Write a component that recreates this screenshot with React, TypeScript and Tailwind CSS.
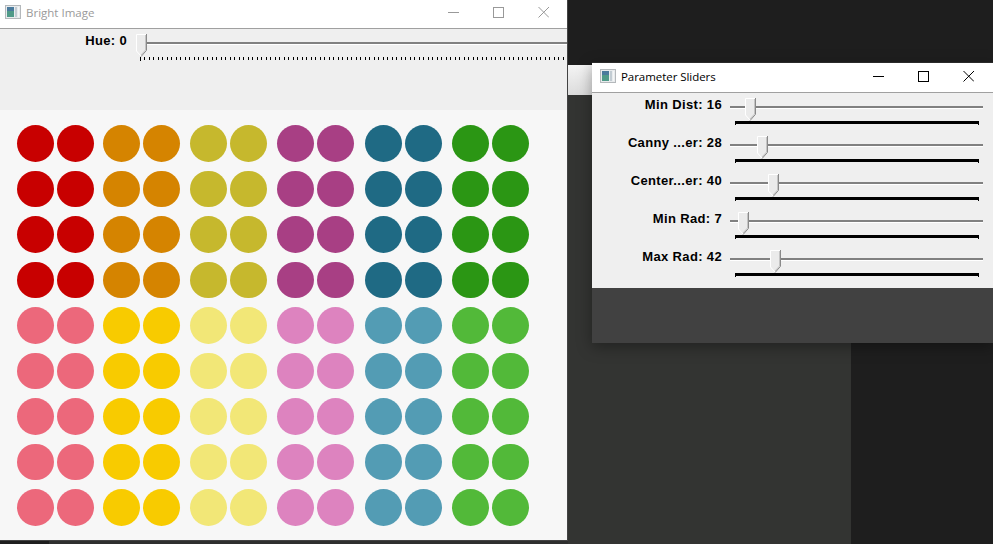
const rows = [
  "bg-[#c80000]",
  "bg-[#d58400]",
  "bg-[#c6b82d]",
  "bg-[#a83f84]",
  "bg-[#1f6a84]",
  "bg-[#2b9614]",
];
const lightRows = [
  "bg-[#ec687b]",
  "bg-[#f8cb00]",
  "bg-[#f2e777]",
  "bg-[#dd83bf]",
  "bg-[#539cb4]",
  "bg-[#52b939]",
];
const groupMargins = ["ml-0", "ml-[9.5px]", "ml-[10.5px]", "ml-[10.5px]", "ml-[11.5px]", "ml-[10.5px]"];

function WindowIcon() {
  return (
    <svg width="16" height="14" viewBox="0 0 16 14" className="shrink-0">
      <rect x="0.5" y="0.5" width="15" height="13" fill="#e8ebed" stroke="#b4b8bb" />
      <rect x="2" y="2" width="7" height="10" fill="#4f9a88" />
      <rect x="2" y="2" width="7" height="4" fill="#4a7a9c" />
      <rect x="10" y="2" width="2" height="10" fill="#c2ccd3" />
      <rect x="13" y="2" width="1" height="10" fill="#f4f6f7" />
    </svg>
  );
}

function WindowButtons({ color, className }: { color: string; className: string }) {
  return (
    <svg width="101" height="11" viewBox="0 0 101 11" className={className}>
      <path d="M0 5.5H11" stroke={color} strokeWidth="1" />
      <rect x="45.5" y="0.5" width="10" height="10" fill="none" stroke={color} />
      <path d="M90.5 0 L101 10.5 M101 0 L90.5 10.5" stroke={color} strokeWidth="1" />
    </svg>
  );
}

function Thumb({ className }: { className: string }) {
  return (
    <svg width="11" height="23" viewBox="0 0 11 23" className={className}>
      <path d="M1 1H10V16L5 22L1 17Z" fill="#ebebeb" />
      <path d="M.5 17V.5H10" fill="none" stroke="#ffffff" />
      <path d="M10.5 0V16.3L5 22.6" fill="none" stroke="#8a8a8a" />
      <path d="M9.5 1V16L5 21" fill="none" stroke="#c4c4c4" />
      <path d="M.5 17L5 22" fill="none" stroke="#ffffff" />
    </svg>
  );
}

function Track({ className }: { className: string }) {
  return (
    <div className={className}>
      <div className="h-[2px] bg-[#808080]" />
      <div className="h-[1px] bg-[#ffffff]" />
    </div>
  );
}

const params = [
  { label: "Min Dist: 16", thumb: "left-[15px]" },
  { label: "Canny ...er: 28", thumb: "left-[27px]" },
  { label: "Center...er: 40", thumb: "left-[38px]" },
  { label: "Min Rad: 7", thumb: "left-[8px]" },
  { label: "Max Rad: 42", thumb: "left-[40px]" },
];

function ParamRow({ label, thumb }: { label: string; thumb: string }) {
  return (
    <div className="flex h-[38px] items-start">
      <div className="-mt-[1px] w-[130px] text-right font-['Liberation_Sans',sans-serif] text-[13px] leading-[16px] font-bold tracking-[0.35px] text-black">
        {label}
      </div>
      <div className="relative ml-[8px] h-[38px] w-[253px]">
        <Track className="absolute top-[8px] right-0 left-0" />
        <Thumb className={`absolute top-0 ${thumb}`} />
        <div className="absolute top-[23px] left-[5px] w-[244px]">
          <div className="h-[3px] bg-black" />
          <div className="flex justify-between">
            <div className="h-[1px] w-[1px] bg-black" />
            <div className="h-[1px] w-[1px] bg-black" />
          </div>
        </div>
      </div>
    </div>
  );
}

export default function App() {
  return (
    <div className="relative h-[544px] w-[993px] overflow-hidden bg-[#1e1e1e]">
      {/* Windows behind */}
      <div className="absolute top-[95px] left-[568px] h-[449px] w-[283px] bg-[#333432]" />
      <div className="absolute top-[65px] left-[568px] h-[30px] w-[24px] bg-gradient-to-b from-[#f4f4f4] to-[#dcdcdc]" />
      <div className="absolute top-[541px] left-[49px] h-[3px] w-[519px] bg-[#2e2f2e]" />

      {/* Bright Image window */}
      <div className="absolute top-0 left-0 flex h-[541px] w-[568px] flex-col border-r border-b border-[#434343] bg-white">
        <div className="flex h-[29px] shrink-0 items-start justify-between border-b border-[#a0a0a0] bg-white">
          <div className="flex items-start gap-[5px] pt-[5px] pl-[5px]">
            <WindowIcon />
            <span className="pt-[1px] font-['Open_Sans',sans-serif] text-[11.5px] leading-[14px] text-[#9a9a9a]">Bright Image</span>
          </div>
          <WindowButtons color="#999999" className="mt-[7px] mr-[18px]" />
        </div>
        <div className="relative h-[81px] shrink-0 bg-[#efefef]">
          <div className="absolute top-[4px] right-[440px] font-['Liberation_Sans',sans-serif] text-[13px] leading-[16px] font-bold tracking-[0.35px] text-black">
            Hue: 0
          </div>
          <Track className="absolute top-[13px] right-0 left-[136px]" />
          <Thumb className="absolute top-[5px] left-[136px]" />
          <div className="absolute top-[28px] right-0 left-[140px] h-[3px] bg-[repeating-linear-gradient(to_right,#000_0,#000_1px,transparent_1px,transparent_4px,#000_4px,#000_5px,transparent_5px,transparent_9px)]" />
          <div className="absolute top-[31px] left-[140px] h-[1px] w-[1px] bg-black" />
        </div>
        <div className="flex flex-1 flex-col gap-[9px] bg-[#f7f7f7] pt-[15px] pl-[17px]">
          {Array.from({ length: 9 }).map((_, r) => (
            <div key={r} className="flex">
              {(r < 4 ? rows : lightRows).map((color, c) => (
                <div key={c} className={`flex gap-[3.5px] ${groupMargins[c]}`}>
                  <div className={`h-[36.5px] w-[36.5px] rounded-full ${color}`} />
                  <div className={`h-[36.5px] w-[36.5px] rounded-full ${color}`} />
                </div>
              ))}
            </div>
          ))}
        </div>
      </div>

      {/* Parameter Sliders window */}
      <div className="absolute top-[62px] left-[592px] flex h-[281px] w-[401px] flex-col bg-[#414141] shadow-[0_4px_14px_rgba(0,0,0,0.35)]">
        <div className="flex h-[31px] shrink-0 items-start justify-between border-t border-b border-t-[#2a2a2a] border-b-[#a0a0a0] bg-white">
          <div className="flex items-start gap-[5px] pt-[6px] pl-[8px]">
            <WindowIcon />
            <span className="pt-[1px] font-['Open_Sans',sans-serif] text-[11.5px] leading-[14px] tracking-[-0.05px] text-black">Parameter Sliders</span>
          </div>
          <WindowButtons color="#000000" className="mt-[8px] mr-[19px]" />
        </div>
        <div className="h-[195px] shrink-0 bg-[#efefef] pt-[5px]">
          {params.map((p) => (
            <ParamRow key={p.label} label={p.label} thumb={p.thumb} />
          ))}
        </div>
      </div>
    </div>
  );
}
